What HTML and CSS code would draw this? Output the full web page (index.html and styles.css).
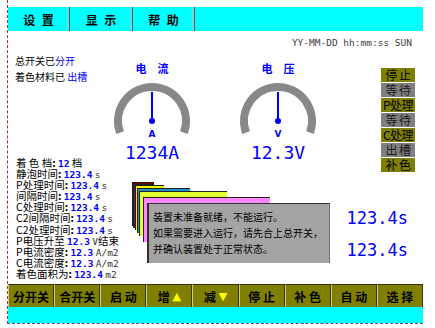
FILE: index.html
```html
<!DOCTYPE html>
<html lang="zh-CN">
<head>
<meta charset="utf-8">
<title>HMI</title>
<link rel="stylesheet" href="styles.css">
</head>
<body>
<div class="app">
  <nav class="menubar">
    <div class="menu-item">设 置</div>
    <div class="menu-item wide">显 示</div>
    <div class="menu-item">帮 助</div>
    <div class="menu-fill"></div>
  </nav>
  <main class="main">
    <div class="datetime">YY-MM-DD hh:mm:ss SUN</div>
    <div class="cols">
      <section class="col-left">
        <div class="info">
          <div>总开关已<span class="hl">分开</span></div>
          <div>着色材料已 <span class="hl">出槽</span></div>
        </div>
        <ul class="params">
          <li>着 色 档<b>:</b> <span class="v">12</span> 档</li>
          <li>静泡时间<b>:</b> <span class="v">123.4</span> <span class="u">s</span></li>
          <li>P处理时间<b>:</b> <span class="v">123.4</span> <span class="u">s</span></li>
          <li>间隔时间<b>:</b> <span class="v">123.4</span> <span class="u">s</span></li>
          <li>C处理时间<b>:</b> <span class="v">123.4</span> <span class="u">s</span></li>
          <li>C2间隔时间<b>:</b> <span class="v">123.4</span> <span class="u">s</span></li>
          <li>C2处理时间<b>:</b> <span class="v">123.4</span> <span class="u">s</span></li>
          <li>P电压升至 <span class="v">12.3</span> <span class="u">V</span>结束</li>
          <li>P电流密度<b>:</b> <span class="v">12.3</span> <span class="u">A/m2</span></li>
          <li>C电流密度<b>:</b> <span class="v">12.3</span> <span class="u">A/m2</span></li>
          <li>着色面积为<b>:</b> <span class="v">123.4</span> <span class="u">m2</span></li>
        </ul>
      </section>
      <section class="col-mid">
        <div class="gauges">
          <div class="gauge">
            <div class="g-title">电　流</div>
            <svg class="dial" width="80" height="52" viewBox="0 0 80 52">
              <path d="M8.05 56.63 A34 34 0 1 1 71.95 56.63" fill="none" stroke="#888888" stroke-width="8"/>
              <line x1="40" y1="16" x2="40" y2="45" stroke="#0000ff" stroke-width="2"/>
              <circle cx="40" cy="45" r="3" fill="#0000ff"/>
            </svg>
            <div class="g-unit">A</div>
            <div class="g-value">1234A</div>
          </div>
          <div class="gauge">
            <div class="g-title">电　压</div>
            <svg class="dial" width="80" height="52" viewBox="0 0 80 52">
              <path d="M8.05 56.63 A34 34 0 1 1 71.95 56.63" fill="none" stroke="#888888" stroke-width="8"/>
              <line x1="40" y1="16" x2="40" y2="45" stroke="#0000ff" stroke-width="2"/>
              <circle cx="40" cy="45" r="3" fill="#0000ff"/>
            </svg>
            <div class="g-unit">V</div>
            <div class="g-value">12.3V</div>
          </div>
        </div>
        <div class="cascade">
          <div class="win w-maroon"></div>
          <div class="win w-purple"></div>
          <div class="win w-yellow"></div>
          <div class="win w-blue"></div>
          <div class="win w-lime"></div>
          <div class="win w-pink"></div>
          <div class="msg">
            <p>装置未准备就绪，不能运行。</p>
            <p>如果需要进入运行，请先合上总开关，</p>
            <p>并确认装置处于正常状态。</p>
          </div>
        </div>
      </section>
      <section class="col-right">
        <ul class="status">
          <li class="olive">停 止</li>
          <li class="gray">等 待</li>
          <li class="olive">P处理</li>
          <li class="gray">等 待</li>
          <li class="olive">C处理</li>
          <li class="gray">出 槽</li>
          <li class="olive">补 色</li>
        </ul>
        <div class="readouts">
          <div>123.4s</div>
          <div>123.4s</div>
        </div>
      </section>
    </div>
  </main>
  <div class="buttonbar">
    <div class="btn">分开关</div>
    <div class="btn">合开关</div>
    <div class="btn">启 动</div>
    <div class="btn">增 <span class="tri">▲</span></div>
    <div class="btn">减 <span class="tri">▼</span></div>
    <div class="btn">停 止</div>
    <div class="btn">补 色</div>
    <div class="btn">自 动</div>
    <div class="btn">选 择</div>
  </div>
  <div class="footer"></div>
</div>
</body>
</html>
```

FILE: styles.css
```css
* { box-sizing: border-box; margin: 0; padding: 0; }

body {
  margin: 0;
  background: #ffffff;
  color: #000000;
  font-family: "Noto Sans CJK SC", "DejaVu Sans", sans-serif;
}

.app {
  margin-left: 7px;
  width: 416px;
  padding-top: 7px;
  border-left: 1px dashed #c02020;
  border-bottom: 1px dashed #505070;
  display: flex;
  flex-direction: column;
}

/* top menu */
.menubar {
  height: 24px;
  display: flex;
  background: #00ffff;
}
.menu-item {
  flex: 0 0 62px;
  display: flex;
  align-items: center;
  justify-content: center;
  font-size: 12px;
  font-weight: bold;
  word-spacing: 4px;
  border-right: 1px solid #1a6a6a;
  box-shadow: inset -2px 0 0 #70d8d8;
}
.menu-item.wide { flex-basis: 63px; }
.menu-fill { flex: 1; }

/* main area */
.main {
  height: 253px;
  display: flex;
  flex-direction: column;
}
.datetime {
  height: 19px;
  padding-top: 6px;
  padding-right: 11px;
  text-align: right;
  font-family: "DejaVu Sans Mono", monospace;
  font-size: 9.5px;
  line-height: 12px;
  color: #404040;
}
.cols {
  flex: 1;
  min-height: 0;
  display: flex;
}

.col-left {
  flex: 0 0 104px;
  min-width: 0;
  padding-left: 7px;
  display: flex;
  flex-direction: column;
}
.info {
  margin-top: 3px;
  font-size: 10px;
  line-height: 16px;
  white-space: nowrap;
}
.hl { color: #0000ff; }

.params {
  list-style: none;
  margin-top: auto;
  padding-bottom: 5px;
  padding-left: 1px;
  font-size: 10.5px;
}
.params li {
  display: block;
  height: 11.1px;
  line-height: 11px;
  white-space: nowrap;
}
.params b { font-weight: bold; }
.params .v {
  color: #0000ff;
  font-family: "DejaVu Sans Mono", monospace;
  font-weight: bold;
  font-size: 9.5px;
  line-height: 11px;
}
.params .u {
  color: #333333;
  font-family: "DejaVu Sans Mono", monospace;
  font-size: 9.5px;
  line-height: 11px;
}

.col-mid {
  flex: 0 0 236px;
  min-width: 0;
  display: flex;
  flex-direction: column;
}
.gauges {
  margin-top: 11px;
  display: flex;
  gap: 46px;
}
.gauge {
  width: 80px;
  display: flex;
  flex-direction: column;
  align-items: center;
}
.g-title {
  font-size: 11px;
  line-height: 14px;
  font-weight: bold;
  color: #0000ff;
}
.dial { display: block; overflow: visible; margin-top: 1px; }
.g-unit {
  font-family: "DejaVu Sans", sans-serif;
  font-size: 9px;
  font-weight: bold;
  line-height: 12px;
  color: #0000ff;
}
.g-value {
  margin-top: 3px;
  font-family: "DejaVu Sans Mono", monospace;
  font-size: 18px;
  line-height: 20px;
  color: #0000ff;
  white-space: nowrap;
}

.cascade {
  position: relative;
  margin-top: 19px;
  height: 81px;
}
.win {
  position: absolute;
  border-top: 1px solid #202020;
  border-left: 1px solid #202020;
}
.w-maroon { left: 20px; top: 0; width: 22px; height: 44px; background: #800000; }
.w-purple { left: 21px; top: 2px; width: 21px; height: 44px; background: #800080; }
.w-yellow { left: 23px; top: 3px; width: 29px; height: 45px; background: #f0f000; }
.w-blue   { left: 25px; top: 6px; width: 53px; height: 45px; background: #2090c8; }
.w-lime   { left: 27px; top: 9px; width: 88px; height: 45px; background: #e4ff30; }
.w-pink   { left: 31px; top: 15px; width: 127px; height: 45px; background: #ff88ff; }
.msg {
  position: absolute;
  left: 35px;
  top: 21px;
  width: 183px;
  height: 60px;
  background: #a4a4a4;
  border-top: 1px solid #303030;
  border-left: 2px solid #303030;
  border-right: 1px solid #707070;
  padding: 5px 0 0 4px;
  font-size: 10px;
  line-height: 16px;
  white-space: nowrap;
  color: #000000;
}

.col-right {
  flex: 1;
  min-width: 0;
  display: flex;
  flex-direction: column;
  align-items: flex-end;
}
.status {
  list-style: none;
  margin-top: 18px;
  margin-right: 8px;
  width: 34px;
}
.status li {
  height: 14px;
  margin-bottom: 1px;
  font-size: 12px;
  line-height: 14px;
  text-align: center;
  white-space: nowrap;
  letter-spacing: -0.5px;
}
.status .olive { background: #808000; color: #000000; }
.status .gray { background: #808080; color: #1a1a1a; }

.readouts {
  margin-top: 35px;
  margin-right: 15px;
  display: flex;
  flex-direction: column;
  gap: 12px;
  font-family: "DejaVu Sans Mono", monospace;
  font-size: 17px;
  line-height: 20px;
  color: #0000ff;
  white-space: nowrap;
}

/* bottom button bar */
.buttonbar {
  height: 23px;
  display: flex;
  background: #808000;
}
.btn {
  flex: 1;
  min-width: 0;
  display: flex;
  align-items: center;
  justify-content: center;
  font-size: 12px;
  font-weight: bold;
  white-space: pre;
  border-top: 1px solid #303000;
  border-left: 1px solid #c8c8a8;
  border-right: 1px solid #3a3a00;
}
.tri {
  color: #ffff00;
  font-family: "DejaVu Sans", sans-serif;
  font-size: 11px;
  font-weight: normal;
}

.footer {
  height: 16px;
  background: #00ffff;
}
```
